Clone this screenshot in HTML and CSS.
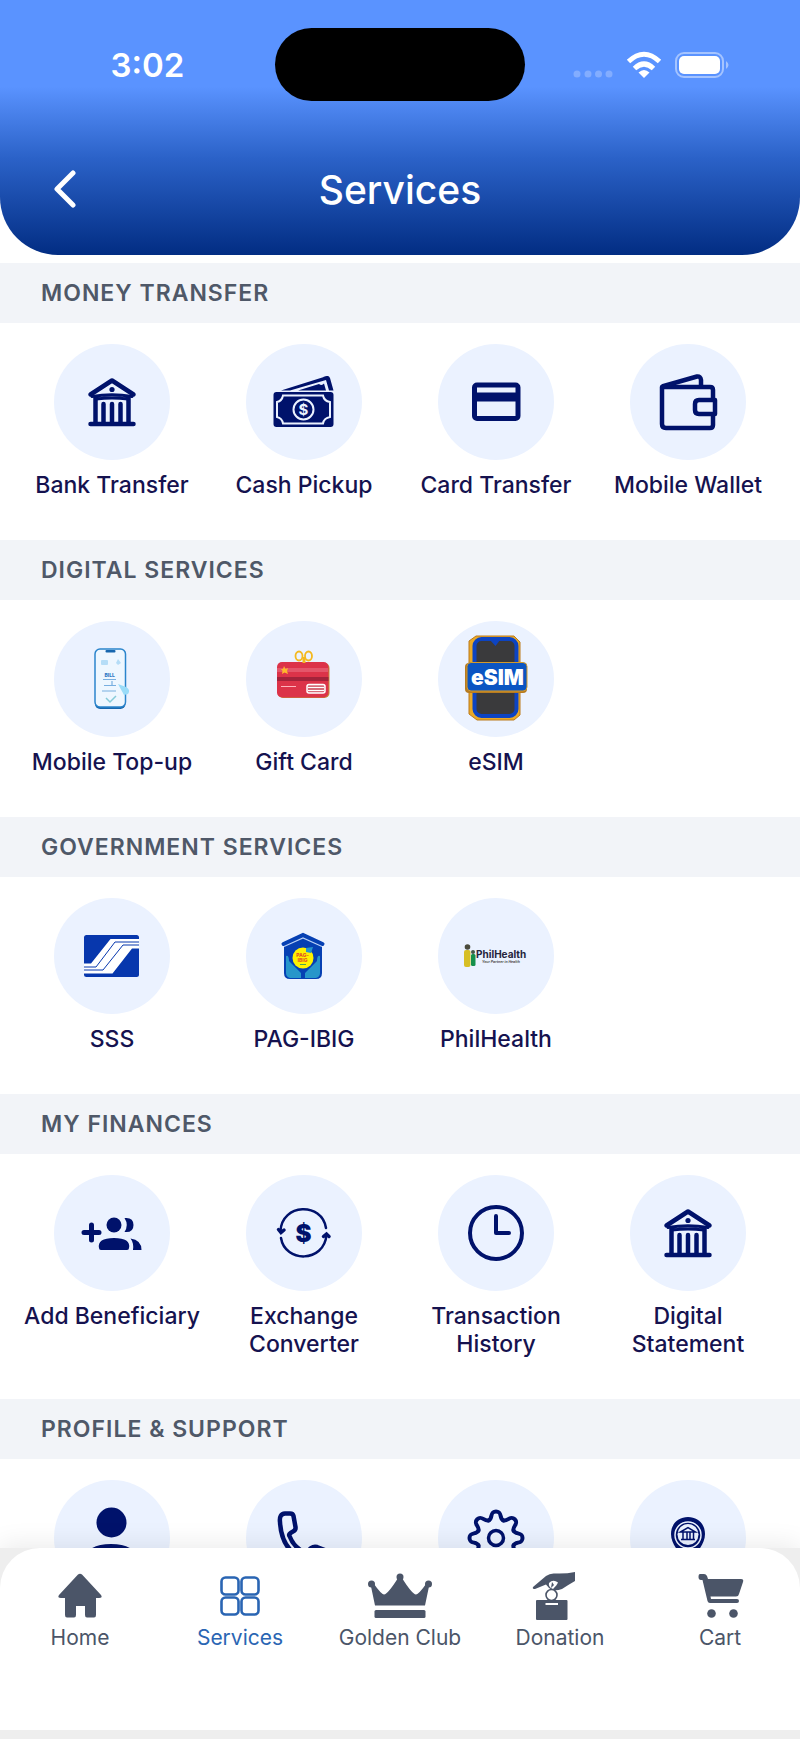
FILE: index.html
```
<!DOCTYPE html>
<html lang="en">
<head>
  <meta charset="UTF-8" />
  <meta name="viewport" content="width=device-width, initial-scale=1.0" />
  <title>Services</title>
  <link rel="stylesheet" href="styles.css">
</head>
<body>

  <!-- Shared shapes -->
  <svg class="defs" aria-hidden="true">
    <symbol id="bank" viewBox="0 0 116 116">
      <g fill="none" stroke="#00126b" stroke-width="4" stroke-linecap="round" stroke-linejoin="round">
        <path d="M36.500 50.500L58 36.500L79.500 50.500M36.500 80H79.500M41.500 54V79M74.500 54V79M49.500 60V79M58 60V79M66.500 60V79" stroke-width="4.500" />
        <path d="M38 52.500Q58 49 78 52.500M42 55Q58 53 74 55" stroke-width="3" />
      </g>
      <circle cx="58" cy="45.500" r="2.600" fill="#00126b" />
    </symbol>
    <symbol id="tooth" viewBox="0 0 116 116">
      <path d="M50.700 40.400C55 38.500 51.500 31.500 58 31.500S61 38.500 65.300 40.400" fill="none" stroke="#00126b" stroke-width="4" stroke-linecap="round" />
    </symbol>
  </svg>

  <div class="app">

    <header class="header">
      <div class="status">
        <span class="time">3:02</span>
        <span class="island"></span>
        <svg class="signals" viewBox="0 0 160 32" aria-hidden="true">
          <g fill="#83adff"><circle cx="7" cy="25" r="3.500" /><circle cx="18" cy="25" r="3.500" /><circle cx="28.500" cy="25" r="3.500" /><circle cx="39" cy="25" r="3.500" /></g>
          <g fill="none" stroke="#fff" stroke-width="5">
            <path d="M58.500 12.500Q74 -2 89.500 12.500" />
            <path d="M64.500 19.500Q74 10.500 83.500 19.500" />
          </g>
          <path d="M68.500 23.500Q74 18.500 79.500 23.500L74 29Z" fill="#fff" />
          <rect x="106" y="4" width="47" height="24" rx="8" fill="none" stroke="#a5c4ff" stroke-width="2" />
          <rect x="109" y="7" width="41" height="18" rx="5" fill="#fff" />
          <path d="M156 12Q161 16 156 20Z" fill="#a5c4ff" />
        </svg>
      </div>
      <div class="titlebar">
        <button class="back" type="button" aria-label="Back">
          <svg viewBox="0 0 24 40"><path d="M20 3L4 19L20 35" fill="none" stroke="#fff" stroke-width="5" stroke-linecap="round" stroke-linejoin="round" /></svg>
        </button>
        <h1>Services</h1>
      </div>
    </header>

    <main class="content">

      <!-- Money transfer -->
      <section>
        <h2>Money Transfer</h2>
        <div class="grid">
          <a class="item" href="#">
            <svg class="icon"><use href="#bank" /></svg>
            <span>Bank Transfer</span>
          </a>
          <a class="item" href="#">
            <svg class="icon" viewBox="0 0 116 116">
              <path d="M35 46.500L81 32Q83 31.500 84 34L87.500 46.500H83L80 36L44 46.500Z" fill="#00126b" />
              <path d="M52 46.500L73 40Q76 42 78 39.500L80 46.500ZM77 33L82 32L84 38Z" fill="#00126b" />
              <rect x="27.500" y="48" width="60" height="35" rx="3" fill="#00126b" />
              <path d="M37 51.500H77Q78 57 84 58V73Q78 74 77 79.500H37Q36 74 31 73V58Q36 57 37 51.500Z" fill="none" stroke="#ebf2ff" stroke-width="2" />
              <circle cx="57.500" cy="65.500" r="10" fill="none" stroke="#ebf2ff" stroke-width="2" />
              <text x="57.500" y="71" font-size="15" font-weight="700" text-anchor="middle" fill="#ebf2ff">$</text>
            </svg>
            <span>Cash Pickup</span>
          </a>
          <a class="item" href="#">
            <svg class="icon" viewBox="0 0 116 116">
              <rect x="36.500" y="41" width="43.500" height="33.500" rx="2.500" fill="none" stroke="#00126b" stroke-width="5" />
              <path d="M36 48.500H81V57.500H36Z" fill="#00126b" />
            </svg>
            <span>Card Transfer</span>
          </a>
          <a class="item" href="#">
            <svg class="icon" viewBox="0 0 116 116">
              <g fill="none" stroke="#00126b" stroke-width="4.500" stroke-linejoin="round">
                <path d="M83 56V46Q83 43 80 43H32V80Q32 84 36 84H80Q83 84 83 81V70" />
                <path d="M32 42.500L67 32.500Q70.500 32 71 36V42" />
                <path d="M85 56H69Q65 56 65 60V66Q65 70 69 70H85Z" />
              </g>
            </svg>
            <span>Mobile Wallet</span>
          </a>
        </div>
      </section>

      <!-- Digital services -->
      <section>
        <h2>Digital Services</h2>
        <div class="grid">
          <a class="item" href="#">
            <svg class="icon" viewBox="0 0 116 116">
              <rect x="41" y="29" width="30.500" height="59" rx="5" fill="#1767ae" />
              <rect x="41" y="28" width="30.500" height="58" rx="5" fill="#eef7ff" stroke="#2b85cc" stroke-width="1.500" />
              <rect x="51.500" y="29" width="10" height="2.500" rx="1" fill="#1767ae" />
              <rect x="47" y="39" width="7" height="5" rx="1" fill="#b5ddf7" />
              <path d="M64 38L67 42L64 44L62 42Z" fill="#b5ddf7" />
              <text x="50.500" y="56" font-size="5" font-weight="800" fill="#2f79c4">BILL</text>
              <path d="M49 58.500H62M50 64.500H62M58 60V64M48 70H62" stroke="#78afe0" stroke-width="1.200" />
              <path d="M64 63L72 66Q77 69 74 73L70 74Z" fill="#9adcf8" />
              <path d="M52 77L56 81L62 75" fill="none" stroke="#86cbd8" stroke-width="1.500" />
            </svg>
            <span>Mobile Top-up</span>
          </a>
          <a class="item" href="#">
            <svg class="icon" viewBox="0 0 116 116">
              <rect x="32" y="42" width="51.500" height="35" rx="5" fill="#c58a34" />
              <rect x="31" y="41" width="51.500" height="35.500" rx="5" fill="#dc3349" />
              <path d="M31 47H82V51H31Z" fill="#e4566a" />
              <path d="M31 56H82.500V60H31Z" fill="#a3233a" />
              <g fill="none" stroke="#f4b91f" stroke-width="1.800"><ellipse cx="53" cy="35" rx="3.500" ry="4.500" /><ellipse cx="62.500" cy="35" rx="3.500" ry="4.500" /><path d="M58 36V42" stroke-width="3" /></g>
              <path d="M38 45L39.500 48L42 47L41 50L42 53L38.500 51.500L36 53L36.500 50L35 48L37 48Z" fill="#ffb72b" />
              <path d="M35 65.500H50" stroke="#ffb3bd" stroke-width="1" />
              <rect x="61" y="63.500" width="18" height="8.500" rx="2" fill="#d66b78" stroke="#fff" stroke-width="1.500" />
              <path d="M62 66.500H78M62 69.500H78" stroke="#fff" stroke-width="1" />
            </svg>
            <span>Gift Card</span>
          </a>
          <a class="item" href="#">
            <svg class="icon" viewBox="0 0 116 116">
              <path d="M38 15H76L82 21V94L76 99H39L31 93V20Z" fill="#eba925" stroke="#bb7b1d" stroke-width="1" />
              <rect x="36.500" y="18" width="42" height="77" rx="7" fill="#3a3a3c" stroke="#0d44c2" stroke-width="4" />
              <path d="M52 19H62L57.500 25Z" fill="#0d44c2" />
              <rect x="27" y="42" width="62" height="30" rx="4" fill="#b77b20" />
              <rect x="29" y="41.500" width="60" height="28.500" rx="4" fill="#0b55c2" stroke="#d49a2a" stroke-width="1" />
              <text x="59.500" y="63.500" font-size="21" font-weight="900" text-anchor="middle" fill="#fff">eSIM</text>
            </svg>
            <span>eSIM</span>
          </a>
        </div>
      </section>

      <!-- Government services -->
      <section>
        <h2>Government Services</h2>
        <div class="grid">
          <a class="item" href="#">
            <svg class="icon" viewBox="0 0 116 116">
              <rect x="30" y="37" width="55" height="42" rx="2.500" fill="#0737ad" />
              <path d="M30 65.500H37L56.500 41H85V50.500H78L58.500 75.500H30Z" fill="#fff" />
              <path d="M30 69H42L61 44H85M30 72H49L69 47H85" fill="none" stroke="#0737ad" stroke-width="1" />
            </svg>
            <span>SSS</span>
          </a>
          <a class="item" href="#">
            <svg class="icon" viewBox="0 0 116 116">
              <path d="M38 47L57 38L76 47V75Q76 81 70 81H44Q38 81 38 75Z" fill="#0640b3" />
              <path d="M37.500 46L57 37L76.500 46" fill="none" stroke="#0640b3" stroke-width="4" stroke-linecap="round" />
              <path d="M38 48.500L57 40L76 48.500" fill="none" stroke="#b7cff6" stroke-width="1.200" />
              <path d="M40 58Q43 57 43 63L55 75V80H44Q40 79 40 75ZM74 58Q71 57 71 63L59 75V80H70Q74 79 74 75Z" fill="#2796ca" />
              <circle cx="57" cy="60" r="10.500" fill="#fff200" />
              <path d="M60 50L67 49L65 55L60 54Z" fill="#2796ca" />
              <text x="56.500" y="59" font-size="5" font-weight="800" text-anchor="middle" fill="#e45720">PAG-</text>
              <text x="56.500" y="64" font-size="5" font-weight="800" text-anchor="middle" fill="#e45720">IBIG</text>
              <path d="M54 66.500H60" stroke="#4da552" stroke-width="1" />
            </svg>
            <span>PAG-IBIG</span>
          </a>
          <a class="item" href="#">
            <svg class="icon" viewBox="0 0 116 116">
              <circle cx="29.500" cy="49" r="2.800" fill="#4b4b3c" />
              <rect x="26" y="52" width="6.500" height="17" rx="2" fill="#d7bf25" />
              <circle cx="35" cy="54" r="2" fill="#425846" />
              <rect x="33" y="56" width="4.500" height="12" rx="1.500" fill="#148f4c" />
              <text x="38" y="60" font-size="10" font-weight="700" fill="#24243c">PhilHealth</text>
              <text x="44" y="64.500" font-size="3.500" font-weight="700" font-style="italic" fill="#555">Your Partner in Health</text>
            </svg>
            <span>PhilHealth</span>
          </a>
        </div>
      </section>

      <!-- Finances -->
      <section>
        <h2>My Finances</h2>
        <div class="grid">
          <a class="item" href="#">
            <svg class="icon" viewBox="0 0 116 116">
              <path d="M37.500 50V65M30 57.500H45" stroke="#00126b" stroke-width="5" stroke-linecap="round" />
              <g fill="#00126b">
                <circle cx="60" cy="50" r="7.500" />
                <path d="M45 73Q43 63 60 63T75 73Q75 75 73 75H47Q45 75 45 73Z" />
                <path d="M70.500 43Q79.500 42 79.500 50T70.500 57Q75 50 70.500 43Z" />
                <path d="M76.500 63.500Q87.500 65 87.500 75H79Q80 68 76.500 63.500Z" />
              </g>
            </svg>
            <span>Add Beneficiary</span>
          </a>
          <a class="item" href="#">
            <svg class="icon" viewBox="0 0 116 116">
              <g fill="none" stroke="#00126b" stroke-width="2.500" stroke-linecap="round">
                <path d="M34.500 56C36 28 76 27 80 53M35 63C39 88 78 88 80.500 60" />
                <path d="M32.500 54.500L35 57.500L38 55M77.500 61.500L80.500 59L83 61.500" stroke-width="3.500" />
              </g>
              <text x="57.500" y="67" font-size="24" font-weight="900" text-anchor="middle" fill="#00126b">$</text>
            </svg>
            <span>Exchange Converter</span>
          </a>
          <a class="item" href="#">
            <svg class="icon" viewBox="0 0 116 116">
              <circle cx="58" cy="58" r="26" fill="none" stroke="#00126b" stroke-width="4" />
              <path d="M58 41V58H71" fill="none" stroke="#00126b" stroke-width="4" stroke-linecap="round" stroke-linejoin="round" />
            </svg>
            <span>Transaction History</span>
          </a>
          <a class="item" href="#">
            <svg class="icon"><use href="#bank" /></svg>
            <span>Digital Statement</span>
          </a>
        </div>
      </section>

      <!-- Profile and support -->
      <section>
        <h2>Profile &amp; Support</h2>
        <div class="grid">
          <a class="item" href="#" aria-label="Profile">
            <svg class="icon" viewBox="0 0 116 116">
              <g fill="#00126b"><circle cx="57.500" cy="42.500" r="15" /><path d="M29 86Q29 64 57 64T85 86Z" /></g>
            </svg>
          </a>
          <a class="item" href="#" aria-label="Support">
            <svg class="icon" viewBox="0 0 116 116">
              <path d="M34 42Q33 34 39 33.500H44Q47 33.500 47.500 36L49.500 47Q50 50 47 51.500Q42 54 43.500 56Q48 68 60 73L65 68Q68 66 71 67L81 71Q83 72 83 75V80Q82 84 76 83Q36 80 34 42Z" fill="none" stroke="#00126b" stroke-width="4.500" stroke-linejoin="round" />
            </svg>
          </a>
          <a class="item" href="#" aria-label="Settings">
            <svg class="icon" viewBox="0 0 116 116">
              <use href="#tooth" />
              <use href="#tooth" transform="rotate(45 58 58)" />
              <use href="#tooth" transform="rotate(90 58 58)" />
              <use href="#tooth" transform="rotate(135 58 58)" />
              <use href="#tooth" transform="rotate(180 58 58)" />
              <use href="#tooth" transform="rotate(225 58 58)" />
              <use href="#tooth" transform="rotate(270 58 58)" />
              <use href="#tooth" transform="rotate(315 58 58)" />
              <circle cx="58" cy="58" r="7.500" fill="none" stroke="#00126b" stroke-width="3.500" />
            </svg>
          </a>
          <a class="item" href="#" aria-label="Branches">
            <svg class="icon" viewBox="0 0 116 116">
              <path d="M58 37C48 37 41 44 41 54C41 66 52 74 58 86C64 74 75 66 75 54C75 44 68 37 58 37Z" fill="#00126b" />
              <circle cx="58" cy="55" r="13" fill="#00126b" stroke="#ebf2ff" stroke-width="1.500" />
              <circle cx="58" cy="54.500" r="10.500" fill="#ebf2ff" />
              <path d="M50.500 52L58 47.500L65.500 52ZM51 59.500H65M53 52V59M57 52V59M60 52V59M63.500 52V59" fill="none" stroke="#00126b" stroke-width="1.500" />
            </svg>
          </a>
        </div>
      </section>
    </main>

    <!-- Bottom tabs -->
    <div class="dock">
      <nav class="tabs">
        <a class="tab" href="#">
          <svg viewBox="0 0 64 48"><path d="M30 2.500Q32 1 34 2.500L53 23Q55 26 51 26H48V43Q48 45.500 46 45.500H39Q37 45.500 37 43V34H28V43Q28 45.500 26 45.500H19Q17 45.500 17 43V26H13Q9 26 11 23Z" fill="currentColor" /></svg>
          <span>Home</span>
        </a>
        <a class="tab active" href="#" aria-current="page">
          <svg viewBox="0 0 64 48">
            <g fill="none" stroke="currentColor" stroke-width="2.600"><rect x="13.500" y="5.500" width="17" height="17" rx="4" /><rect x="33.500" y="5.500" width="17" height="17" rx="4" /><rect x="13.500" y="25.500" width="17" height="17" rx="4" /><rect x="33.500" y="25.500" width="17" height="17" rx="4" /></g>
          </svg>
          <span>Services</span>
        </a>
        <a class="tab" href="#">
          <svg viewBox="0 0 64 48">
            <g fill="currentColor">
              <circle cx="3.500" cy="12" r="3.500" /><circle cx="32" cy="5" r="3.500" /><circle cx="60.500" cy="12" r="3.500" />
              <path d="M2.500 12L6 12Q13 22 16 22.500Q20 22 30 6H34Q44 22 48 22.500Q51 22 58 12L61.500 12L57 33.500H7Z" />
              <rect x="6.500" y="38" width="51" height="8" rx="1.500" />
            </g>
          </svg>
          <span>Golden Club</span>
        </a>
        <a class="tab" href="#">
          <svg viewBox="0 0 64 48">
            <path d="M5 15L18 4Q22 1 27 1.500Q38 2 47 0V9Q40 13 34 17Q29 19 24 18L21 16L18 12.500L7 17Q4 17 5 15Z" fill="currentColor" />
            <path d="M21 11Q25 7 30 10.500Q29 13 25 17Q20 15 21 11Z" fill="#fff" />
            <path d="M24 10L26 13L23 16Z" fill="currentColor" />
            <rect x="8" y="28" width="31.500" height="20" rx="1" fill="currentColor" />
            <circle cx="23.500" cy="23" r="5.500" fill="#fff" stroke="currentColor" stroke-width="1.600" />
            <rect x="17.500" y="31" width="12.500" height="2" fill="#fff" />
          </svg>
          <span>Donation</span>
        </a>
        <a class="tab" href="#">
          <svg viewBox="0 0 64 48">
            <g fill="currentColor">
              <path d="M12 2H16Q18 2 19 4L20 7H53Q56 7 55 10L51 22Q50.500 24.500 48 24.500H22.500L23 27H49Q51 27 51 29T49 31H22Q20 31 19.500 29L14.500 8H13Q10.500 8 10.500 5T12 2Z" />
              <circle cx="23.500" cy="41.500" r="4.300" /><circle cx="45.500" cy="41.500" r="4.300" />
            </g>
          </svg>
          <span>Cart</span>
        </a>
      </nav>
    </div>
  </div>

</body>
</html>
```
FILE: styles.css
```
body {
  margin: 0;
  background-color: #fff;
  font-family: Inter, "Liberation Sans", sans-serif;
}
h1, h2 {
  margin: 0;
}
a {
  color: inherit;
  text-decoration: none;
}
.defs {
  position: absolute;
  width: 0;
  height: 0;
}
.app {
  display: flex;
  flex-direction: column;
  height: 100vh;
}

/* Header */
.header {
  flex: none;
  color: #fff;
  background: linear-gradient(#5a93ff 0%, #5a93ff 34%, #2b62c8 62%, #022d83 100%);
  border-radius: 0 0 58px 58px;
}
.status {
  display: grid;
  grid-template-columns: 1fr 250px 1fr;
  align-items: center;
  padding-top: 28px;
}
.time {
  padding-left: 20px;
  font-size: 33px;
  font-weight: 600;
  line-height: 40px;
  text-align: center;
}
.island {
  height: 73px;
  border-radius: 40px;
  background-color: #000;
}
.signals {
  width: 160px;
  height: 32px;
  margin-left: 45px;
}
.titlebar {
  display: grid;
  grid-template-columns: 80px 1fr 80px;
  align-items: center;
  padding: 64px 28px 40px;
}
.back {
  width: 80px;
  height: 50px;
  padding: 0 0 0 25px;
  border: 0;
  background: none;
  text-align: left;
  cursor: pointer;
}
.back svg {
  display: block;
  width: 24px;
  height: 40px;
}
h1 {
  font-size: 39px;
  font-weight: 500;
  line-height: 50px;
  text-align: center;
}

/* Service lists */
.content {
  flex: 1;
  min-height: 0;
  padding-top: 8px;
  overflow: hidden;
}
h2 {
  padding: 0 41px;
  background-color: #f2f4f8;
  color: #4f5868;
  font-size: 23px;
  font-weight: 600;
  line-height: 60px;
  letter-spacing: 1px;
  text-transform: uppercase;
}
.grid {
  display: grid;
  grid-template-columns: repeat(4, 1fr);
  padding: 21px 16px 41px;
}
.item {
  display: flex;
  flex-direction: column;
  align-items: center;
  gap: 11px;
  padding: 0 6px;
  color: #15124f;
  font-size: 23px;
  font-weight: 500;
  line-height: 28px;
  text-align: center;
}
.icon {
  width: 116px;
  height: 116px;
  border-radius: 50%;
  background-color: #ebf2ff;
}

/* Bottom tabs */
.dock {
  position: relative;
  flex: none;
  padding-bottom: 9px;
  background-color: #eee;
  box-shadow: 0 -4px 24px rgba(0, 0, 0, 0.08);
}
.tabs {
  display: grid;
  grid-template-columns: repeat(5, 1fr);
  padding: 24px 0 80px;
  border-radius: 40px 40px 0 0;
  background-color: #fff;
}
.tab {
  display: flex;
  flex-direction: column;
  align-items: center;
  gap: 6px;
  color: #4b5568;
  font-size: 21px;
  line-height: 24px;
}
.tab svg {
  width: 64px;
  height: 48px;
}
.tab.active {
  color: #2a65b3;
}
```
